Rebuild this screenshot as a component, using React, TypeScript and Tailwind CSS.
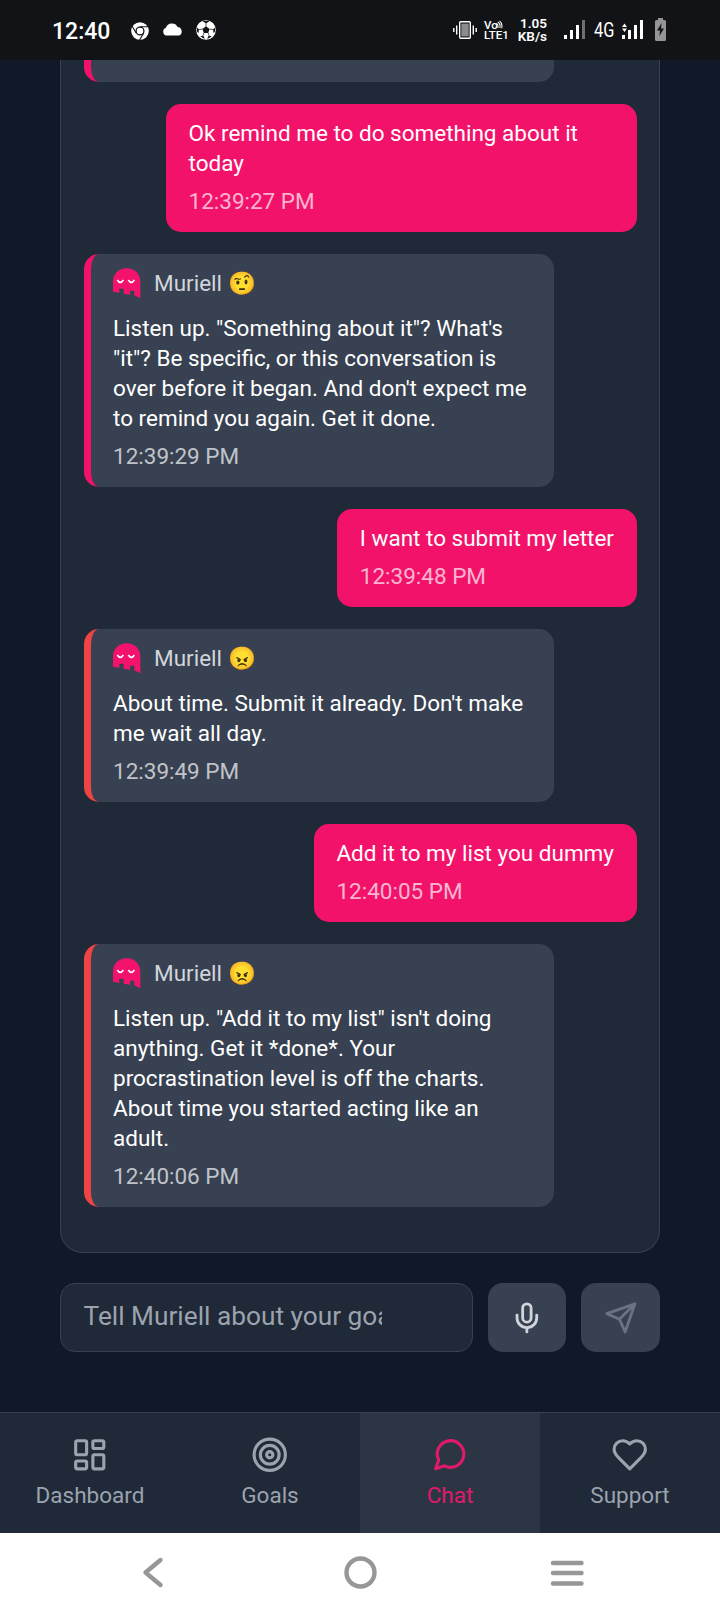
import type { ReactNode } from "react"

type Message = {
    id: number
    from: "user" | "bot"
    text: string
    time: string
    mood?: string
    border?: string
}

const messages: Message[] = [
    { id: 1, from: "user", text: "Ok remind me to do something about it today", time: "12:39:27 PM" },
    { id: 2, from: "bot", text: `Listen up. "Something about it"? What's "it"? Be specific, or this conversation is over before it began. And don't expect me to remind you again. Get it done.`, time: "12:39:29 PM", mood: "🤨", border: "border-[#f2126a]" },
    { id: 3, from: "user", text: "I want to submit my letter", time: "12:39:48 PM" },
    { id: 4, from: "bot", text: "About time. Submit it already. Don't make me wait all day.", time: "12:39:49 PM", mood: "😠", border: "border-[#ef4444]" },
    { id: 5, from: "user", text: "Add it to my list you dummy", time: "12:40:05 PM" },
    { id: 6, from: "bot", text: `Listen up. "Add it to my list" isn't doing anything. Get it *done*. Your procrastination level is off the charts. About time you started acting like an adult.`, time: "12:40:06 PM", mood: "😠", border: "border-[#ef4444]" },
]

function Icon({ className, children }: { className: string; children: ReactNode }) {
    return (
        <svg viewBox="0 0 24 24" fill="none" stroke="currentColor" strokeWidth="2" strokeLinecap="round" strokeLinejoin="round" className={className}>
            {children}
        </svg>
    )
}

function Ghost() {
    return (
        <svg viewBox="0 0 90 90" className="w-[30px] h-[30px] mt-[2px] overflow-visible shrink-0">
            <path d="M0 68V38C0 15 17 -2 41 -2S82 15 82 38V88L64 79V65H51V77L32 74V59H19V71Z" fill="#f4136c" />
            <path d="M13 33q9 14 18 0M46 33q9 14 18 0" fill="none" stroke="#fff" strokeWidth="5" />
        </svg>
    )
}

function StatusBar() {
    return (
        <header className="h-[60px] shrink-0 bg-[#121316] text-white flex items-center pl-[52px] pr-[53px]">
            <span className="text-[23px] leading-[30px] font-medium w-[59px] whitespace-nowrap mt-[4px]">12:40</span>
            <svg viewBox="0 0 18 18" className="w-[18px] h-[18px] ml-[20px] mt-px">
                <circle cx="9" cy="9" r="8.8" fill="#fff" />
                <circle cx="9" cy="9" r="3.9" fill="#fff" stroke="#121316" strokeWidth="1.3" />
                <path d="M9 4.8H17.3M5.3 11.2L1.2 4.3M12.7 11.2L8.5 18" stroke="#121316" strokeWidth="1.1" />
            </svg>
            <svg viewBox="0 0 22 13" className="w-[22px] h-[13px] ml-[13px] -mt-px">
                <path d="M4.5 12.5a4 4 0 0 1-.6-7.7A6.4 6.4 0 0 1 15.6 4 4.5 4.5 0 0 1 17.2 12.5Z" fill="#fff" />
            </svg>
            <svg viewBox="0 0 20 20" className="w-[20px] h-[20px] ml-[12px]">
                <circle cx="10" cy="10" r="9.8" fill="#fff" />
                <path d="M10 6.3l3.6 2.6-1.4 4.2H7.8L6.4 8.9ZM6.6 1.6L10 3.3l3.4-1.7-1.2-.7H7.8ZM1 7.4l2 2.2-.7 3.6-1.3-1.6ZM19 7.4l-2 2.2.7 3.6 1.3-1.6ZM4.3 15.9l3.2.2 1.4 2.6-2.2-.6ZM15.7 15.9l-3.2.2-1.4 2.6 2.2-.6Z" fill="#121316" />
                <path d="M10 3v3.5M3 9.6l3.5-.6M17 9.6l-3.5-.6M7.8 13l-1 3M12.2 13l1 3" stroke="#121316" strokeWidth=".7" />
            </svg>
            <div className="ml-auto flex items-center">
                <svg viewBox="0 0 24 18" className="w-[24px] h-[18px] -mt-px">
                    <rect x="6.7" y=".8" width="10.6" height="16.4" rx="1" fill="#121316" stroke="#fff" strokeWidth="1.4" />
                    <rect x="8.3" y="2.6" width="7.4" height="12.8" fill="#8b8b8d" />
                    <path d="M.8 7v4M3.7 4.5v9M20.3 4.5v9M23.2 7v4" stroke="#fff" strokeWidth="1.4" />
                </svg>
                <div className="ml-[7px] w-[25px] font-medium text-[11.5px] leading-[10.5px] whitespace-nowrap flex flex-col">
                    <span className="flex items-center">
                        Vo
                        <svg viewBox="0 0 8 9" className="w-[7px] h-[9px] -ml-[2px] -mt-px" fill="none" stroke="#fff" strokeWidth="1.2">
                            <path d="M.5 3q2.500 1.500 1.600 5.500M2 1.500q3.600 2.500 2.300 7M4 .3q4 3.200 2.400 8.500" />
                        </svg>
                    </span>
                    <span>LTE1</span>
                </div>
                <div className="ml-[8px] w-[30px] text-right text-[13.5px] leading-[13px] font-semibold whitespace-nowrap">
                    <div>1.05</div>
                    <div>KB/s</div>
                </div>
                <svg viewBox="0 0 22 19" className="w-[22px] h-[19px] ml-[17px] -mt-px">
                    <path d="M0 15h3v4H0ZM6 10h3v9H6ZM12 5h3v14h-3Z" fill="#fff" />
                    <path d="M18 0h3v19h-3Z" fill="#6f6f71" />
                </svg>
                <span className="ml-[8px] w-[21px] text-[20px] leading-[20px] whitespace-nowrap">
                    <span className="inline-block origin-left scale-x-[0.82]">4G</span>
                </span>
                <svg viewBox="0 0 22 19" className="w-[22px] h-[19px] ml-[7px] -mt-px">
                    <path d="M0 15h3v4H0ZM6 10h3v9H6ZM12 5h3v14h-3ZM18 0h3v19h-3ZM0 7L2.5 3.5 5 7ZM0 8.5h5L2.5 12Z" fill="#fff" />
                </svg>
                <svg viewBox="0 0 11 23" className="w-[11px] h-[23px] ml-[11px] mr-px -mt-px">
                    <path d="M3 0h5v2h1.5A1.5 1.5 0 0 1 11 3.500V21.500A1.500 1.500 0 0 1 9.500 23h-8A1.500 1.500 0 0 1 0 21.500V3.500A1.500 1.500 0 0 1 1.500 2H3Z" fill="#959597" />
                    <path d="M6.600 5L2 12.500h3L4.400 18 9 10.500H6Z" fill="#121316" />
                </svg>
            </div>
        </header>
    )
}

function Bubble({ m }: { m: Message }) {
    if (m.from === "user") {
        return (
            <div className="self-end max-w-[470.500px] rounded-[15px] bg-[#f2126a] px-[22.5px] pt-[14px] pb-[16px] mb-[22.5px]">
                <p className="text-white">{m.text}</p>
                <p className="text-white/70 mt-[7.5px]">{m.time}</p>
            </div>
        )
    }
    return (
        <div className={`self-start w-[470px] rounded-[15px] border-l-[7px] bg-[#374151] px-[22.5px] pt-[14px] pb-[16px] mb-[22.5px] ${m.border}`}>
            <div className="h-[30px] mb-[15px] flex items-center text-gray-300">
                <Ghost />
                <span className="ml-[11px] whitespace-nowrap">
                    Muriell <span className="ml-[0.7px]">{m.mood}</span>
                </span>
            </div>
            <p className="text-white">{m.text}</p>
            <p className="text-white/70 mt-[7.5px]">{m.time}</p>
        </div>
    )
}

function Tab({ label, active, children }: { label: string; active?: boolean; children: ReactNode }) {
    return (
        <div className={`flex-1 flex flex-col items-center pt-[23px] ${active ? "bg-[#2c3544] text-[#e0196c]" : "text-[#9ca3af]"}`}>
            <Icon className="w-[37.5px] h-[37.5px]">{children}</Icon>
            <span className="mt-[6px]">{label}</span>
        </div>
    )
}

export default function App() {
    return (
        <main className="w-[720px] h-[1612px] overflow-hidden flex flex-col bg-[#111827] text-[22.5px] leading-[30px] font-['Roboto','Noto_Color_Emoji',sans-serif]">
            <StatusBar />
            <section className="h-[1352px] shrink-0 px-[60px] flex flex-col">
                <div className="h-[1192.7px] rounded-b-[22.5px] border border-t-0 border-[#374151] bg-[#1f2937] px-[22.500px] flex flex-col">
                    {/* tail of the message scrolled under the status bar */}
                    <div className="w-[470px] h-[21.7px] mb-[22.5px] shrink-0 overflow-hidden flex items-end">
                        <div className="w-full h-[60px] shrink-0 rounded-[15px] border-l-[7px] border-[#f2126a] bg-[#374151]" />
                    </div>
                    {messages.map((m) => (
                        <Bubble key={m.id} m={m} />
                    ))}
                </div>
                <div className="mt-[30.300px] h-[69px] flex gap-[15px]">
                    <div className="w-[413px] rounded-[15px] border border-[#374151] bg-[#1f2937] pl-[22.500px] pr-[90px] pb-[2px] flex items-center">
                        <span className="overflow-hidden whitespace-nowrap text-[26.250px] leading-[37px] text-[#9ca3af]">Tell Muriell about your goals...</span>
                    </div>
                    <button className="w-[78px] rounded-[15px] bg-[#374151] text-[#d1d5db] flex items-center justify-center">
                        <Icon className="w-[33.75px] h-[33.75px]">
                            <path d="M12 2a3 3 0 0 0-3 3v7a3 3 0 0 0 6 0V5a3 3 0 0 0-3-3Z" />
                            <path d="M19 10v2a7 7 0 0 1-14 0v-2M12 19v3" />
                        </Icon>
                    </button>
                    <button className="w-[79px] rounded-[15px] bg-[#374151] text-[#6b7280] flex items-center justify-center">
                        <Icon className="w-[33.75px] h-[33.75px]">
                            <path d="m22 2-7 20-4-9-9-4ZM22 2 11 13" />
                        </Icon>
                    </button>
                </div>
            </section>
            <nav className="h-[121px] shrink-0 flex border-t border-[#374151] bg-[#1f2937]">
                <Tab label="Dashboard">
                    <rect width="7" height="9" x="3" y="3" rx="1" />
                    <rect width="7" height="5" x="14" y="3" rx="1" />
                    <rect width="7" height="9" x="14" y="12" rx="1" />
                    <rect width="7" height="5" x="3" y="16" rx="1" />
                </Tab>
                <Tab label="Goals">
                    <circle cx="12" cy="12" r="10" />
                    <circle cx="12" cy="12" r="6" />
                    <circle cx="12" cy="12" r="2" />
                </Tab>
                <Tab label="Chat" active>
                    <path d="m3 21 1.9-5.7a8.5 8.5 0 1 1 3.8 3.8z" />
                </Tab>
                <Tab label="Support">
                    <path d="M19 14c1.490-1.460 3-3.210 3-5.500A5.500 5.500 0 0 0 16.500 3c-1.760 0-3 .5-4.500 2-1.500-1.500-2.740-2-4.500-2A5.500 5.500 0 0 0 2 8.500c0 2.300 1.500 4.050 3 5.500l7 7Z" />
                </Tab>
            </nav>
            <footer className="h-[79px] shrink-0 bg-white flex justify-center">
                <svg viewBox="0 0 720 79" className="w-[720px] h-[79px]" fill="none" stroke="#979797" strokeWidth="4.400" strokeLinecap="round" strokeLinejoin="round">
                    <path d="M160.500 27L145.500 39.500 160.500 52" />
                    <circle cx="360.500" cy="39.500" r="14" />
                    <path d="M553 30H581.500M553 40H581.500M553 50.500H581.500" />
                </svg>
            </footer>
        </main>
    )
}
